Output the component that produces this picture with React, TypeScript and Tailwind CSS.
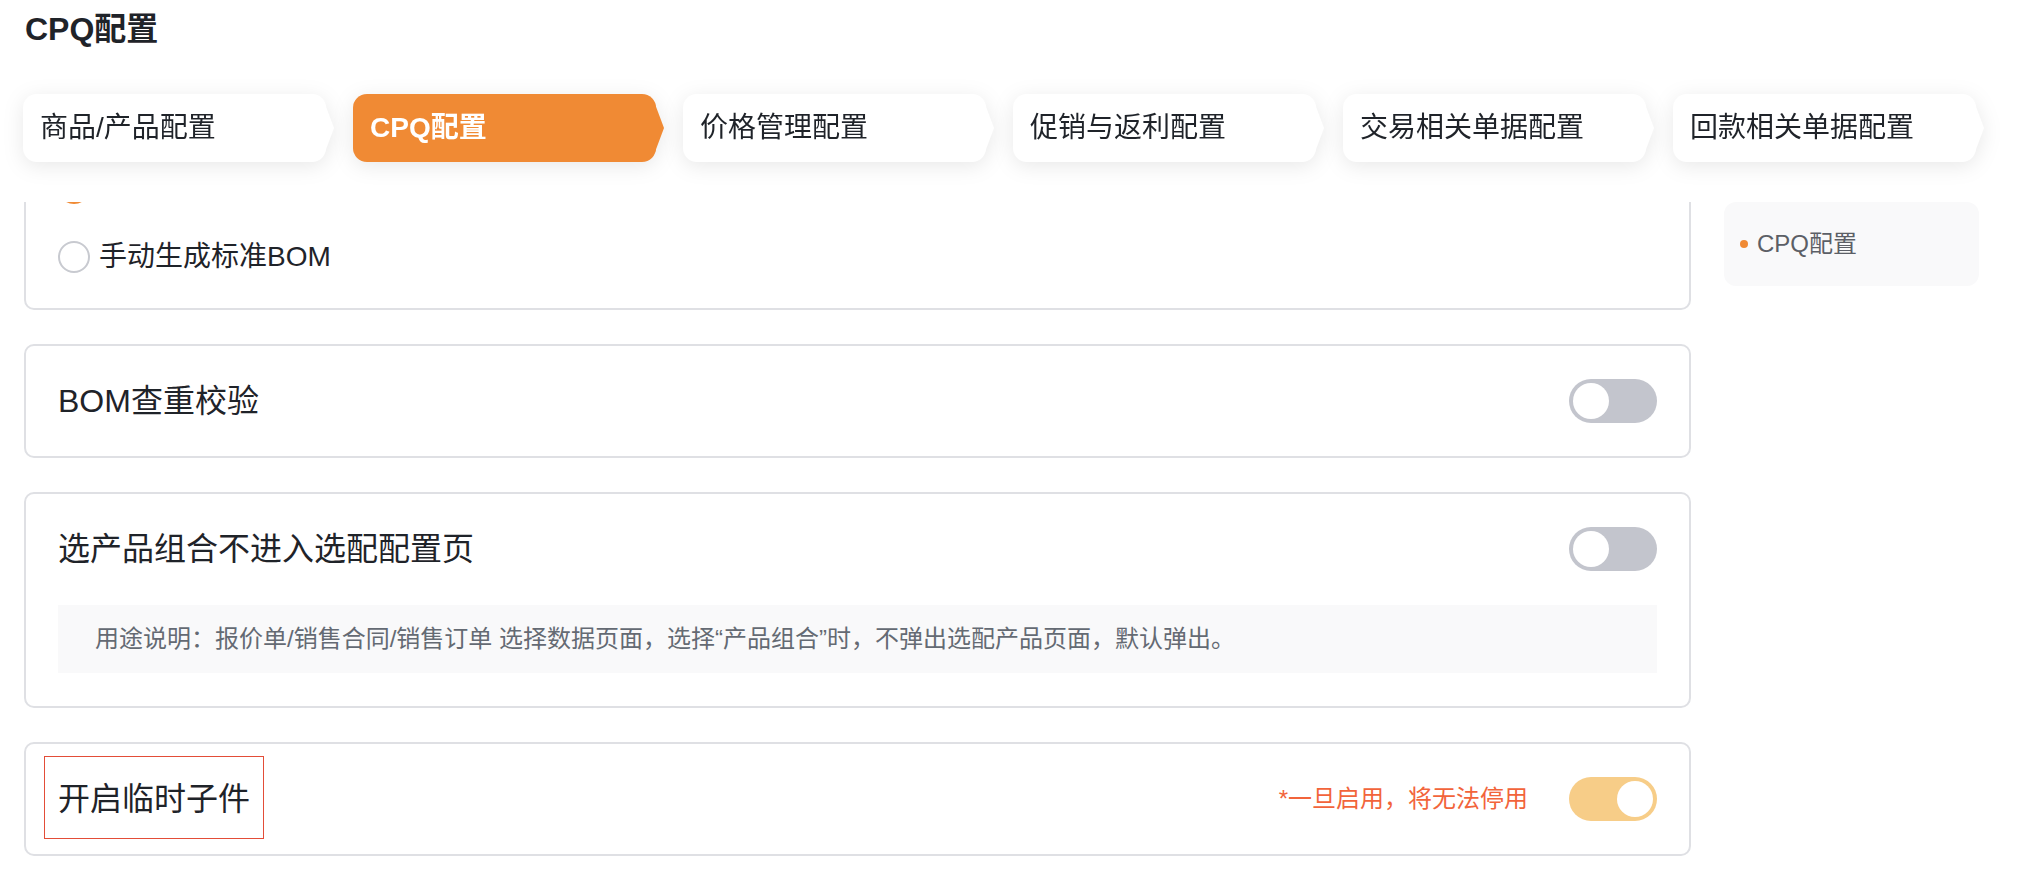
import React from "react"

const tabs = [
  { label: "商品/产品配置" },
  { label: "CPQ配置", active: true },
  { label: "价格管理配置" },
  { label: "促销与返利配置" },
  { label: "交易相关单据配置" },
  { label: "回款相关单据配置" },
]

function Toggle({ on }: { on?: boolean }) {
  return (
    <div
      className={
        on
          ? "flex h-[44px] w-[88px] shrink-0 items-center justify-end rounded-full bg-[#f7cd88] px-[4px]"
          : "flex h-[44px] w-[88px] shrink-0 items-center justify-start rounded-full bg-[#c3c5cd] px-[4px]"
      }
    >
      <div className="h-[36px] w-[36px] rounded-full bg-white" />
    </div>
  )
}

function Radio({ checked, label }: { checked?: boolean; label: string }) {
  return (
    <div className="flex h-[36px] items-center gap-[9px]">
      {checked ? (
        <div className="flex h-[32px] w-[32px] items-center justify-center rounded-full border-2 border-[#f08a34]">
          <div className="h-[14px] w-[14px] rounded-full bg-[#f08a34]" />
        </div>
      ) : (
        <div className="h-[32px] w-[32px] rounded-full border-2 border-[#c8cad0]" />
      )}
      <span className="text-[28px] leading-[36px] text-[#1f2329]">{label}</span>
    </div>
  )
}

function Card({ children, className = "" }: { children: React.ReactNode; className?: string }) {
  return (
    <div className={"relative rounded-[10px] border-2 border-[#dfe0e4] bg-white px-8 py-[33px] " + className}>
      {children}
    </div>
  )
}

export default function App() {
  return (
    <div
      className="h-[878px] w-[2040px] overflow-hidden bg-white text-[#1f2329]"
      style={{ fontFamily: '"Liberation Sans", "Noto Sans CJK SC", sans-serif' }}
    >
      {/* Page title */}
      <div className="pl-[25px] pt-[9px] text-[32px] font-bold leading-[40px] text-[#1f2329]">CPQ配置</div>

      {/* Step tabs */}
      <div className="mt-[45px] flex gap-[27px] pl-[23px]">
        {tabs.map((t) => (
          <div key={t.label} className="relative drop-shadow-[0_4px_10px_rgba(0,0,0,0.09)]">
            <div
              className={
                t.active
                  ? "flex h-[68px] w-[303px] items-center rounded-[14px] bg-[#f08a34] pl-[17px] text-[28px] font-bold text-white"
                  : "flex h-[68px] w-[303px] items-center rounded-[14px] bg-white pl-[17px] text-[28px] text-[#1f2329]"
              }
            >
              {t.label}
            </div>
            <div
              className={
                t.active
                  ? "absolute right-[-8px] top-[10px] h-0 w-0 border-y-[24px] border-l-[9px] border-y-transparent border-l-[#f08a34]"
                  : "absolute right-[-8px] top-[10px] h-0 w-0 border-y-[24px] border-l-[9px] border-y-transparent border-l-white"
              }
            />
          </div>
        ))}
      </div>

      {/* Scroll area */}
      <div className="mt-[40px] flex h-[676px] gap-[33px] overflow-hidden pl-[24px]">
        <div className="w-[1667px] shrink-0">
          <div className="-mt-[139px] flex flex-col gap-[34px]">
            <Card>
              <div className="text-[32px] leading-[44px]">BOM生成方式</div>
              <div className="mt-[28px] flex flex-col gap-[33px]">
                <Radio checked label="自动生成标准BOM" />
                <Radio label="手动生成标准BOM" />
              </div>
            </Card>

            <Card>
              <div className="flex h-[44px] items-center justify-between">
                <span className="text-[32px]">BOM查重校验</span>
                <Toggle />
              </div>
            </Card>

            <Card>
              <div className="flex h-[44px] items-center justify-between">
                <span className="text-[32px]">选产品组合不进入选配配置页</span>
                <Toggle />
              </div>
              <div className="mt-[34px] flex h-[68px] items-center bg-[#f9f9fa] pl-[37px] text-[24px] text-[#646a73]">
                用途说明：报价单/销售合同/销售订单 选择数据页面，选择“产品组合”时，不弹出选配产品页面，默认弹出。
              </div>
            </Card>

            <Card>
              <div className="flex h-[44px] items-center justify-between">
                <span className="text-[32px]">开启临时子件</span>
                <div className="flex items-center gap-[41px]">
                  <span className="text-[24px] text-[#f2643b]">*一旦启用，将无法停用</span>
                  <Toggle on />
                </div>
              </div>
              <div className="absolute left-[18px] top-[12px] h-[83px] w-[220px] border border-[#e34d38]" />
            </Card>
          </div>
        </div>

        {/* Side anchor nav */}
        <div className="h-[84px] w-[255px] shrink-0">
          <div className="flex h-[84px] items-center rounded-[12px] bg-[#f9f9fa] pl-[16px]">
            <span className="h-[8px] w-[8px] rounded-full bg-[#f08a34]" />
            <span className="ml-[9px] text-[24px] text-[#5c5f66]">CPQ配置</span>
          </div>
        </div>
      </div>
    </div>
  )
}
